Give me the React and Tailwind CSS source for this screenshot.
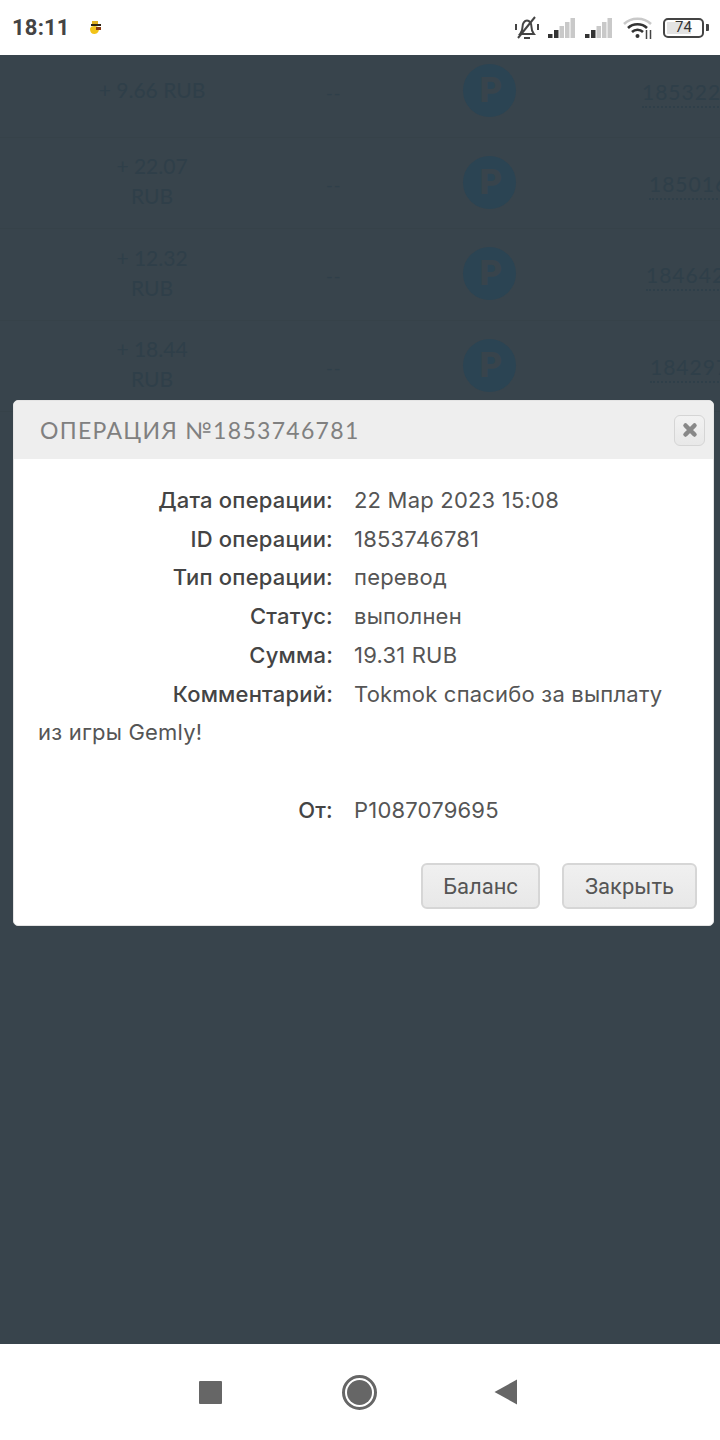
import React from 'react';

const rows = [
    { amount: ['+ 9.66 RUB'], id: '1853222', idPad: 'pl-[642px]' },
    { amount: ['+ 22.07', 'RUB'], id: '1850164', idPad: 'pl-[649px]' },
    { amount: ['+ 12.32', 'RUB'], id: '1846423', idPad: 'pl-[646px]' },
    { amount: ['+ 18.44', 'RUB'], id: '1842975', idPad: 'pl-[650px]' },
];

const details = [
    ['Дата операции:', '22 Мар 2023 15:08'],
    ['ID операции:', '1853746781'],
    ['Тип операции:', 'перевод'],
    ['Статус:', 'выполнен'],
    ['Сумма:', '19.31 RUB'],
    ['Комментарий:', 'Tokmok спасибо за выплату из игры Gemly!'],
];

function Signal() {
    return (
        <svg width="27" height="20" viewBox="0 0 27 20">
            <path d="M0 16h4.5v4H0z" fill="#333" />
            <path d="M6 12h4.5v8H6z" fill="#333" />
            <path d="M11.5 8H16v12h-4.5z" fill="#c9c9c9" />
            <path d="M17 4h4.5v16H17z" fill="#c9c9c9" />
            <path d="M22.5 0H27v20h-4.5z" fill="#c9c9c9" />
        </svg>
    );
}

function StatusBar() {
    return (
        <div className="h-[55px] bg-white flex items-center justify-between pl-[12px] pr-[11px]">
            <div className="flex items-center gap-[19px]">
                <span className="text-[22px] tracking-[0.2px] font-bold text-[#444] font-['Roboto',sans-serif]">18:11</span>
                <svg width="13" height="13" viewBox="0 0 13 13">
                    <path d="M1 8c0-2 2-3 4.5-3S10 6 10 8s-1.500 5-4.500 5S1 11 1 8z" fill="#f2c318" />
                    <path d="M3 0h6v3H3z" fill="#e0b020" />
                    <path d="M2 3h10v2H2z" fill="#2f2412" />
                    <path d="M7 6h5v3H7z" fill="#8a3b12" />
                </svg>
            </div>
            <div className="flex items-center">
                <svg width="24" height="24" viewBox="0 0 24 24" fill="none" stroke="#444" strokeWidth="2" className="mr-[9px]">
                    <path d="M5 18c1.500-2 2.500-3 2.500-7 0-3.500 2-6.500 4.500-6.500s4.500 3 4.500 6.500c0 4 1 5 2.500 7z" />
                    <path d="M9 22h6" />
                    <path d="M3 22L20 1" />
                    <path d="M1 8v6M23 8v6" />
                </svg>
                <Signal />
                <div className="w-[10px]" />
                <Signal />
                <svg width="30" height="22" viewBox="0 0 30 22" fill="none" className="ml-[11px]">
                    <path d="M1 7c7-7 20-7 27 0" stroke="#c9c9c9" strokeWidth="2.5" />
                    <path d="M5 11c5-5 14-5 19 0" stroke="#333" strokeWidth="2.5" />
                    <path d="M9 15c3-3 8-3 11 0" stroke="#333" strokeWidth="2.5" />
                    <circle cx="14.500" cy="19" r="2" fill="#333" />
                    <path d="M23.500 13v9M27.500 13v9" stroke="#444" strokeWidth="1.500" />
                </svg>
                <div className="ml-[10px] w-[41px] h-[20px] border-2 border-[#444] rounded-[5px] flex items-center justify-center relative overflow-hidden">
                    <div className="absolute left-[2px] top-[2px] bottom-[2px] w-[24px] bg-[#e3e3e3]" />
                    <span className="relative text-[15px] leading-none text-[#333] font-['Roboto',sans-serif]">74</span>
                </div>
                <div className="ml-[2px] w-[3px] h-[7px] bg-[#444] rounded-r-[1px]" />
            </div>
        </div>
    );
}

function Row({ row }) {
    return (
        <div className="h-[91.5px] relative border-b border-[#364249] font-['Lato',sans-serif] text-[#2f3f49] text-[21px] overflow-hidden">
            <div className="absolute left-[57px] w-[190px] top-0 bottom-0 pb-[3px] flex flex-col items-center justify-center leading-[30px]">
                {row.amount.map((line) => (
                    <span key={line}>{line}</span>
                ))}
            </div>
            <span className="absolute left-[326px] top-[38px] leading-none text-[18px] tracking-[1px]">--</span>
            <div className="absolute left-[463px] top-[18px] w-[53px] h-[53px] rounded-full bg-[#2b4453] flex items-center justify-center pl-[3px] text-[#38444c] text-[35px] font-black leading-none font-['Roboto',sans-serif]">
                P
            </div>
            <div className={row.idPad + ' pt-[30px]'}>
                <span className="inline-block border-b-2 border-dotted border-[#2f3f49] text-[21px] tracking-[1px] leading-[28px] whitespace-nowrap">
                    {row.id}
                </span>
            </div>
        </div>
    );
}

function Modal() {
    return (
        <div className="absolute left-[13px] top-[345px] w-[701px] h-[526px] bg-white rounded-[5px] border border-[#e4e4e4] overflow-hidden">
            <div className="h-[58px] bg-[#eeeeee] flex items-center justify-between pl-[26px] pr-[8px]">
                <span className="text-[#808080] text-[23px] tracking-[1.3px] font-['Lato',sans-serif]">ОПЕРАЦИЯ №1853746781</span>
                <button className="w-[31px] h-[31px] border border-[#d5d5d5] rounded-[6px] bg-gradient-to-b from-[#f2f2f2] to-[#e8e8e8] flex items-center justify-center">
                    <svg width="16" height="16" viewBox="0 0 16 16">
                        <path d="M3.500 3.500l9 9M12.500 3.500l-9 9" stroke="#888" strokeWidth="4.500" strokeLinecap="round" />
                    </svg>
                </button>
            </div>
            <div className="pt-[22px] pl-[24px] pr-[30px] text-[22px] leading-[38.7px] text-[#555] tracking-[0.2px] font-['Inter',sans-serif]">
                {details.map(([label, value]) => (
                    <div key={label}>
                        <span className="inline-block w-[295px] mr-[21px] text-right font-medium text-[#444]">{label}</span>
                        {value}
                    </div>
                ))}
                <div className="mt-[38.7px]">
                    <span className="inline-block w-[295px] mr-[21px] text-right font-medium text-[#444]">От:</span>
                    P1087079695
                </div>
            </div>
            <div className="absolute right-[16px] bottom-[16px] flex gap-[22px] font-['Roboto',sans-serif] text-[22px] text-[#555]">
                <button className="w-[119px] h-[46px] border-2 border-[#d6d6d6] rounded-[6px] bg-gradient-to-b from-[#f0f0f0] to-[#e8e8e8]">Баланс</button>
                <button className="w-[135px] h-[46px] border-2 border-[#d6d6d6] rounded-[6px] bg-gradient-to-b from-[#f0f0f0] to-[#e8e8e8]">Закрыть</button>
            </div>
        </div>
    );
}

function NavBar() {
    return (
        <div className="h-[96px] bg-white relative flex items-center">
            <div className="absolute left-[199px] top-[37px] w-[23px] h-[23px] bg-[#666] rounded-[1px]" />
            <div className="absolute left-[342px] top-[31px] w-[35px] h-[35px] rounded-full border-[3px] border-[#666] flex items-center justify-center">
                <div className="w-[25px] h-[25px] rounded-full bg-[#666]" />
            </div>
            <svg width="24" height="26" viewBox="0 0 24 26" className="absolute left-[494px] top-[35px]">
                <path d="M23 0.500v25L0.500 13z" fill="#666" />
            </svg>
        </div>
    );
}

export default function App() {
    return (
        <div className="w-[720px] h-[1440px] bg-white flex flex-col overflow-hidden">
            <StatusBar />
            <div className="relative flex-1 bg-[#38444c] overflow-hidden">
                <div className="-mt-[9px]">
                    {rows.map((row) => (
                        <Row key={row.id} row={row} />
                    ))}
                </div>
                <Modal />
            </div>
            <NavBar />
        </div>
    );
}
